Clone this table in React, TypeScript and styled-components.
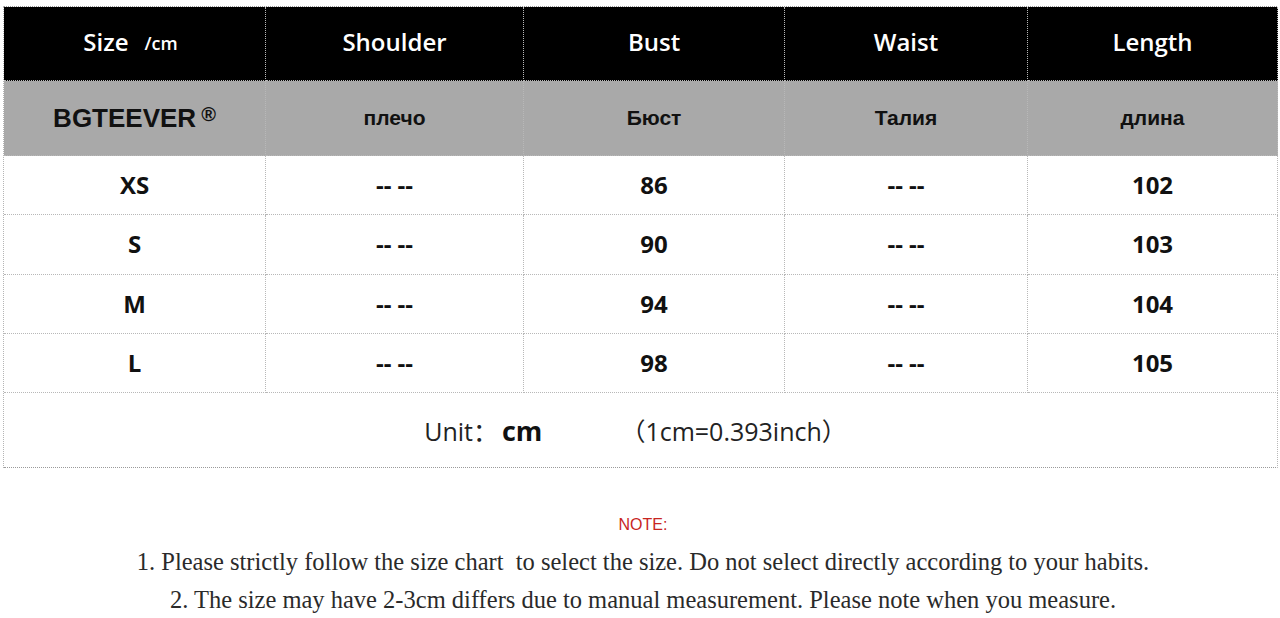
import React from "react";
import styled, { createGlobalStyle } from "styled-components";

const Global = createGlobalStyle`
  html, body { margin: 0; padding: 0; background: #fff; }
  body { width: 1280px; height: 618px; overflow: hidden; }
`;

const Page = styled.div`
  padding: 6px 0 0 3px;
  width: 1280px;
  box-sizing: border-box;
`;

const Table = styled.div`
  display: grid;
  width: 1274px;
  grid-template-columns: 262px 258px 261px 243px 250px;
  grid-template-rows: 74px 75px 59px 60px 59px 59px 75px;
  border-top: 1px dotted #9a9a9a;
  border-left: 1px dotted #b5b5b5;
  box-sizing: border-box;
`;

type Kind = "head" | "sub" | "data";

const Cell = styled.div<{ $kind: Kind }>`
  display: flex;
  align-items: center;
  justify-content: center;
  box-sizing: border-box;
  border-right: 1px dotted #b8b8b8;
  border-bottom: 1px dotted #b8b8b8;
  padding-bottom: ${(p) => (p.$kind === "head" ? "4px" : p.$kind === "data" ? "2px" : "0")};
  background: ${(p) => (p.$kind === "head" ? "#000" : p.$kind === "sub" ? "#a9a9a9" : "#fff")};
  color: ${(p) => (p.$kind === "head" ? "#fff" : "#111")};
  font-family: ${(p) => (p.$kind === "sub" ? '"Liberation Sans", Arial, sans-serif' : '"Open Sans", sans-serif')};
  font-weight: ${(p) => (p.$kind === "head" ? 600 : 700)};
  font-size: ${(p) => (p.$kind === "sub" ? "21px" : "24px")};
`;

const SizeWord = styled.span`
  margin-right: 16px;
`;

const SmallUnit = styled.span`
  font-size: 18px;
  padding-top: 3px;
`;

const HeadInner = styled.span`
  display: flex;
  align-items: center;
  margin-right: 8px;
`;

const Brand = styled.span`
  font-family: "Liberation Sans", Arial, sans-serif;
  font-weight: 700;
  font-size: 26px;
  color: #111;
`;

const Reg = styled.sup`
  font-size: 20px;
  margin-left: 5px;
  vertical-align: 6px;
`;

const UnitRow = styled.div`
  grid-column: 1 / -1;
  display: flex;
  align-items: center;
  justify-content: center;
  box-sizing: border-box;
  border-right: 1px dotted #b8b8b8;
  border-bottom: 1px dotted #9a9a9a;
  font-family: "Open Sans", "Noto Sans CJK SC", sans-serif;
  font-size: 25px;
  color: #222;
  padding-right: 10px;
`;

const UnitBold = styled.span`
  font-weight: 700;
  color: #111;
  font-size: 27px;
  margin-left: 4px;
  margin-right: 78px;
`;

const Notes = styled.div`
  display: flex;
  flex-direction: column;
  align-items: center;
  padding-top: 45px;
  padding-left: 3px;
`;

const NoteTitle = styled.div`
  font-family: "Liberation Sans", Arial, sans-serif;
  font-size: 16px;
  color: #c8251f;
  height: 24px;
  line-height: 24px;
  margin-bottom: 6px;
`;

const NoteLine = styled.div`
  font-family: "Liberation Serif", "Times New Roman", serif;
  font-size: 24.5px;
  color: #2a2a2a;
  line-height: 38px;
`;

const headers = ["Shoulder", "Bust", "Waist", "Length"];
const ru = ["плечо", "Бюст", "Талия", "длина"];
const rows: [string, string, string, string, string][] = [
  ["XS", "-- --", "86", "-- --", "102"],
  ["S", "-- --", "90", "-- --", "103"],
  ["M", "-- --", "94", "-- --", "104"],
  ["L", "-- --", "98", "-- --", "105"],
];

export default function App() {
  return (
    <Page>
      <Global />
      <Table>
        <Cell $kind="head">
          <HeadInner>
            <SizeWord>Size</SizeWord>
            <SmallUnit>/cm</SmallUnit>
          </HeadInner>
        </Cell>
        {headers.map((h) => (
          <Cell $kind="head" key={h}>
            {h}
          </Cell>
        ))}
        <Cell $kind="sub">
          <Brand>
            BGTEEVER<Reg>®</Reg>
          </Brand>
        </Cell>
        {ru.map((h) => (
          <Cell $kind="sub" key={h}>
            {h}
          </Cell>
        ))}
        {rows.map((r) =>
          r.map((v, i) => (
            <Cell $kind="data" key={r[0] + i}>
              {v}
            </Cell>
          ))
        )}
        <UnitRow>
          Unit：<UnitBold>cm</UnitBold>（1cm=0.393inch）
        </UnitRow>
      </Table>
      <Notes>
        <NoteTitle>NOTE:</NoteTitle>
        <NoteLine>
          1. Please strictly follow the size chart &nbsp;to select the size. Do not select directly according to your habits.
        </NoteLine>
        <NoteLine>2. The size may have 2-3cm differs due to manual measurement. Please note when you measure.</NoteLine>
      </Notes>
    </Page>
  );
}
